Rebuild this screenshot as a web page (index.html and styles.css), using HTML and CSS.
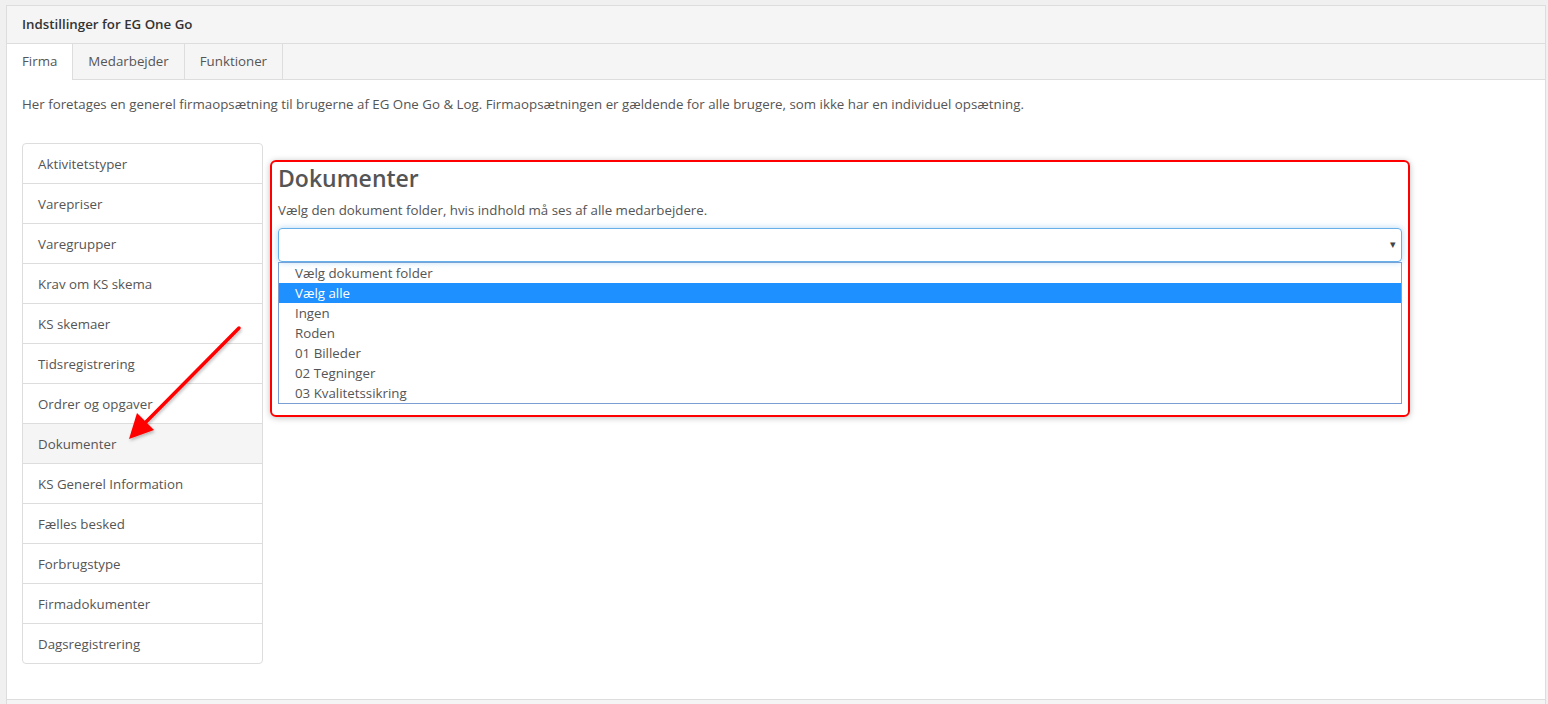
FILE: index.html
```html
<!DOCTYPE html>
<html lang="da">
<head>
    <meta charset="UTF-8">
    <title>Indstillinger for EG One Go</title>
    <link rel="stylesheet" href="styles.css">
</head>
<body>
    <div class="panel">
        <div class="panel-heading">Indstillinger for EG One Go</div>
        <ul class="tabs">
            <li class="tab active">Firma</li>
            <li class="tab">Medarbejder</li>
            <li class="tab">Funktioner</li>
        </ul>
        <div class="panel-body">
            <p class="intro">Her foretages en generel firmaopsætning til brugerne af EG One Go &amp; Log. Firmaopsætningen er gældende for alle brugere, som ikke har en individuel opsætning.</p>
            <div class="settings">
                <ul class="side-nav">
                    <li>Aktivitetstyper</li>
                    <li>Varepriser</li>
                    <li>Varegrupper</li>
                    <li>Krav om KS skema</li>
                    <li>KS skemaer</li>
                    <li>Tidsregistrering</li>
                    <li>Ordrer og opgaver</li>
                    <li class="active">Dokumenter</li>
                    <li>KS Generel Information</li>
                    <li>Fælles besked</li>
                    <li>Forbrugstype</li>
                    <li>Firmadokumenter</li>
                    <li>Dagsregistrering</li>
                </ul>
                <div class="content">
                    <div class="highlight-box">
                        <h2>Dokumenter</h2>
                        <p class="help">Vælg den dokument folder, hvis indhold må ses af alle medarbejdere.</p>
                        <div class="select-box">
                            <span class="caret">&#9662;</span>
                        </div>
                        <ul class="dropdown">
                            <li>Vælg dokument folder</li>
                            <li class="selected">Vælg alle</li>
                            <li>Ingen</li>
                            <li>Roden</li>
                            <li>01 Billeder</li>
                            <li>02 Tegninger</li>
                            <li>03 Kvalitetssikring</li>
                        </ul>
                    </div>
                </div>
            </div>
        </div>
        <div class="panel-footer"></div>
    </div>

    <!-- annotation arrow drawn on top of the screenshot -->
    <svg class="annotation" width="1548" height="704" viewBox="0 0 1548 704">
        <defs>
            <filter id="shadow" x="-20%" y="-20%" width="140%" height="140%">
                <feDropShadow dx="1" dy="2" stdDeviation="1.5" flood-color="#000" flood-opacity="0.25"/>
            </filter>
        </defs>
        <g filter="url(#shadow)">
            <line x1="239" y1="328" x2="143" y2="425" stroke="#f00" stroke-width="3.5" stroke-linecap="round"/>
            <polygon points="129,439 137,413 154,430" fill="#f00"/>
        </g>
    </svg>
</body>
</html>
```

FILE: styles.css
```css
body {
    margin: 0;
    background: #f0f0f0;
    font-family: "Open Sans", "Noto Sans", sans-serif;
    font-size: 13.3px;
    color: #555;
    height: 704px;
    overflow: hidden;
}

ul {
    list-style: none;
    margin: 0;
    padding: 0;
}

.panel {
    margin: 5px 2px 0 6px;
    background: #fff;
    border: 1px solid #ddd;
    border-bottom: none;
}

.panel-heading {
    height: 37px;
    line-height: 37px;
    padding-left: 15px;
    background: #f5f5f5;
    border-bottom: 1px solid #ddd;
    font-weight: 600;
    color: #333;
}

.tabs {
    display: flex;
    height: 35px;
    background: #f5f5f5;
    border-bottom: 1px solid #ddd;
}

.tab {
    padding: 0 15px;
    line-height: 35px;
    border-right: 1px solid #ddd;
    color: #555;
}

.tab.active {
    background: #fff;
    height: 36px;
}

.panel-body {
    padding: 0 15px 35px;
}

.intro {
    margin: 0;
    padding: 15px 0 0;
    line-height: 18px;
    height: 48px;
}

.settings {
    display: flex;
    gap: 7px;
    align-items: flex-start;
}

.side-nav {
    width: 239px;
    flex-shrink: 0;
    border: 1px solid #ddd;
    border-radius: 4px;
}

.side-nav li {
    height: 39px;
    line-height: 40px;
    padding-left: 15px;
    border-top: 1px solid #ddd;
}

.side-nav li:first-child {
    border-top: none;
}

.side-nav li.active {
    background: #f5f5f5;
}

.content {
    flex: 1;
    padding-top: 17px;
    padding-right: 120px;
}

.highlight-box {
    border: 2px solid #f00;
    border-radius: 6px;
    padding: 0 6px 11px 6px;
    box-shadow: 0 1px 6px rgba(0, 0, 0, 0.25);
}

.highlight-box h2 {
    margin: 0;
    font-size: 23px;
    font-weight: 600;
    line-height: 32px;
    color: #555;
}

.help {
    margin: 7px 0 9px;
    line-height: 18px;
}

.select-box {
    position: relative;
    height: 32px;
    border: 1px solid #66afe9;
    border-radius: 4px;
    box-shadow: 0 0 6px rgba(102, 175, 233, 0.5);
}

.caret {
    position: absolute;
    right: 5px;
    top: 7px;
    font-size: 11px;
    color: #444;
}

.dropdown {
    border: 1px solid #7b9fd4;
}

.dropdown li {
    height: 20px;
    line-height: 20px;
    padding-left: 16px;
    color: #555;
}

.dropdown li.selected {
    background: #1e90ff;
    color: #fff;
}

.panel-footer {
    height: 6px;
    background: #f5f5f5;
    border-top: 1px solid #ddd;
}

.annotation {
    position: absolute;
    top: 0;
    left: 0;
    pointer-events: none;
}
```
